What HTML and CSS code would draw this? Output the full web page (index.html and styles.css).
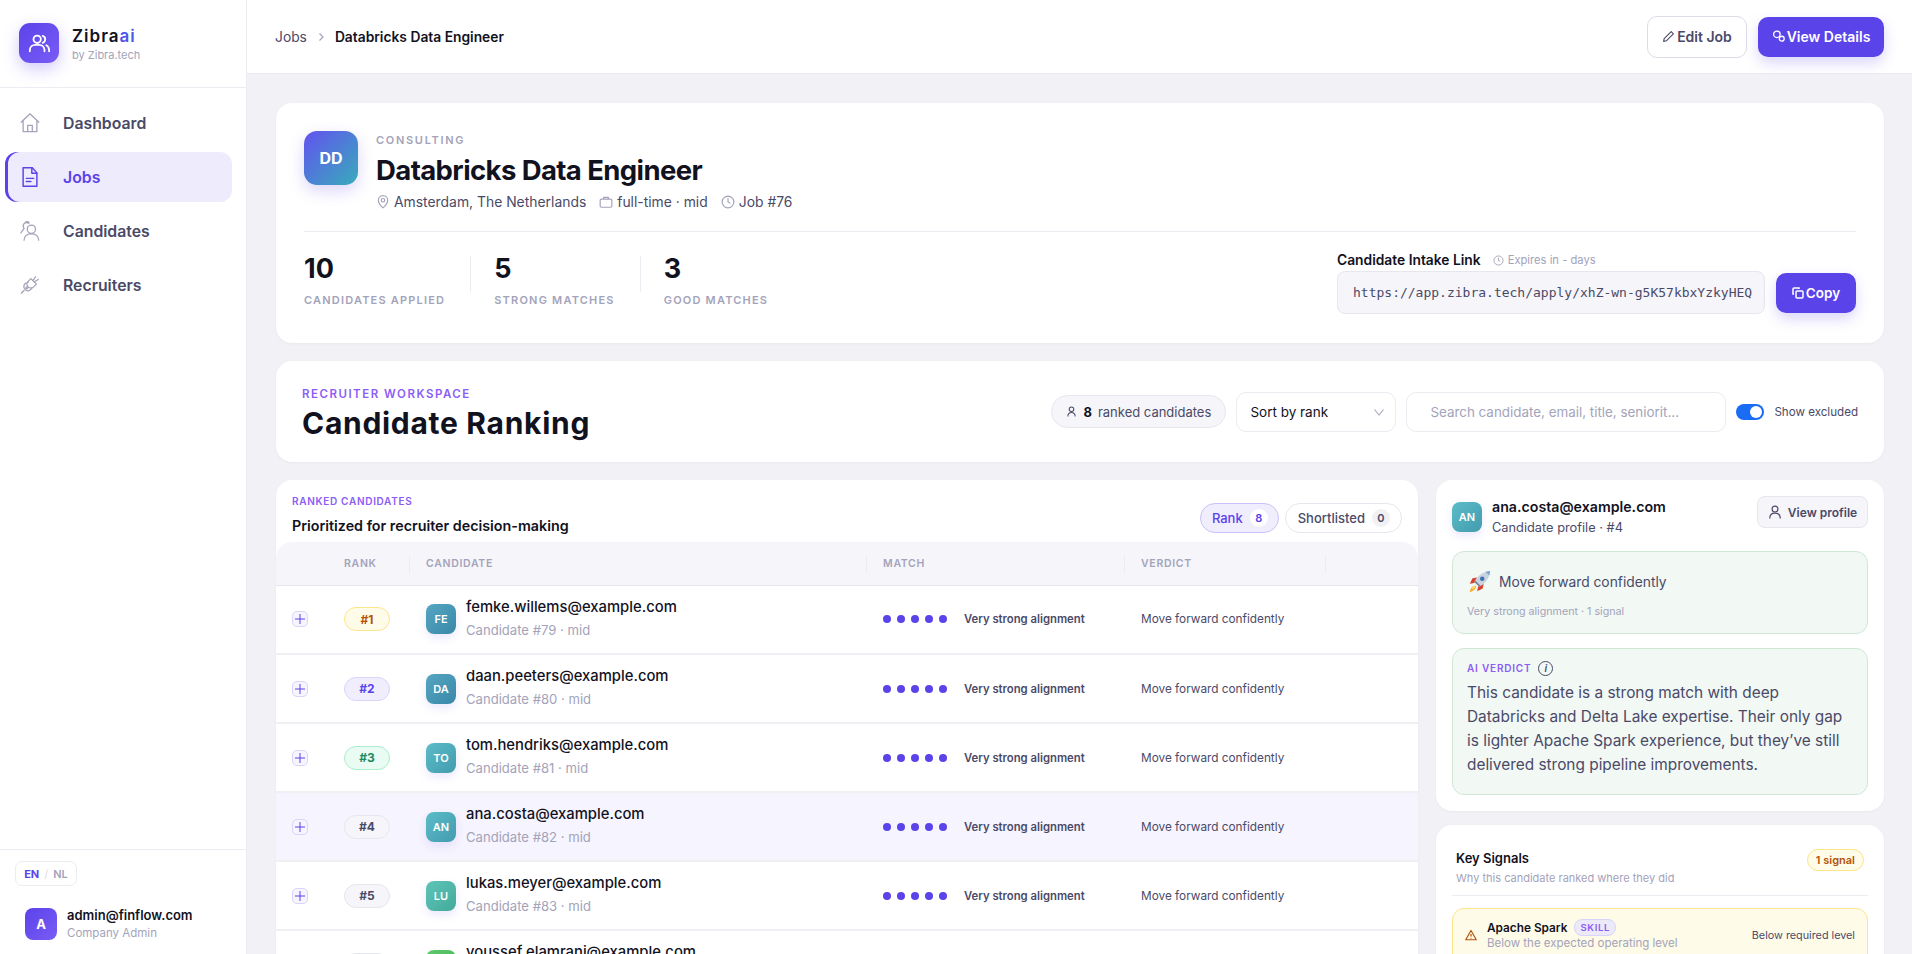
FILE: index.html
```html
<!DOCTYPE html>
<html>
    <head>
        <title>Databricks Data Engineer - Zibra</title>
        <link rel="stylesheet" href="styles.css">
    </head>
    <body>
        <div class="app">
            <!-- Sidebar -->
            <aside class="sidebar">
                <div class="brand">
                    <div class="brand-icon">
                        <svg width="22" height="22" viewBox="0 0 24 24" fill="none" stroke="#fff" stroke-width="2" stroke-linecap="round" stroke-linejoin="round"><circle cx="10" cy="8" r="4"/><path d="M2 21v-1.500a6 6 0 0 1 6-5.500h4a6 6 0 0 1 6 5.500V21"/><path d="M16 4.200a4 4 0 0 1 0 7.600"/><path d="M20 14.500a6 6 0 0 1 3 5V21"/></svg>
                    </div>
                    <div>
                        <div class="brand-name">Zibra<span>ai</span></div>
                        <div class="brand-sub">by Zibra.tech</div>
                    </div>
                </div>
                <nav class="nav">
                    <a class="nav-item">
                        <svg width="22" height="22" viewBox="0 0 24 24" fill="none" stroke="#a3a3ba" stroke-width="1.400" stroke-linejoin="round"><path d="M2 11.500 12 2l10 9.500"/><path d="M4.500 9.500V21.500h15V9.500"/><path d="M9.500 21.500v-7h5v7"/></svg>
                        Dashboard
                    </a>
                    <a class="nav-item active">
                        <svg width="22" height="22" viewBox="0 0 24 24" fill="none" stroke="#5b43ea" stroke-width="1.600" stroke-linejoin="round" stroke-linecap="round"><path d="M4.500 2h10l5 5.500V22h-15z"/><path d="M14 2v6h5.500"/><path d="M8 13.500h8M8 17h5"/></svg>
                        Jobs
                    </a>
                    <a class="nav-item">
                        <svg width="22" height="22" viewBox="0 0 24 24" fill="none" stroke="#a3a3ba" stroke-width="1.400" stroke-linecap="round"><circle cx="13.500" cy="10" r="4.500"/><path d="M5.500 22c0-4.500 3.500-7 8-7s8 2.500 8 7"/><path d="M10.500 3.500A4 4 0 0 0 5.500 4c-1.500 1.500-1 3.500 0 5.500L2 14"/><path d="M7 2.500c1-.8 3-1 4 .5"/></svg>
                        Candidates
                    </a>
                    <a class="nav-item">
                        <svg width="22" height="22" viewBox="0 0 24 24" fill="none" stroke="#a3a3ba" stroke-width="1.400" stroke-linecap="round" stroke-linejoin="round"><path d="M13 5l6 6-3 3a4.200 4.200 0 0 1-6-6z"/><path d="M18 3l-2.500 4M21 6l-4 2.500"/><path d="M10 9 7.500 10a4 4 0 0 0-1 6.500 4 4 0 0 0 5.500 1l2-2"/><path d="M5.500 18 2.500 21"/><circle cx="8.500" cy="15" r="1"/></svg>
                        Recruiters
                    </a>
                </nav>
                <div class="side-foot">
                    <div class="lang"><b>EN</b><i>/</i><span>NL</span></div>
                    <div class="user">
                        <div class="user-avatar">A</div>
                        <div>
                            <div class="user-mail">admin@finflow.com</div>
                            <div class="user-role">Company Admin</div>
                        </div>
                    </div>
                </div>
            </aside>

            <main class="main">
                <!-- Top bar -->
                <header class="topbar">
                    <div class="crumbs">
                        <span>Jobs</span>
                        <svg width="10" height="10" viewBox="0 0 10 10" fill="none" stroke="#a3a3ba" stroke-width="1.200"><path d="M3.500 1.500 7 5 3.500 8.500"/></svg>
                        <b>Databricks Data Engineer</b>
                    </div>
                    <div class="top-actions">
                        <a class="btn btn-light">
                            <svg width="13" height="13" viewBox="0 0 24 24" fill="none" stroke="#4a4a68" stroke-width="2" stroke-linejoin="round"><path d="M17 3l4 4L8 20l-5 1 1-5z"/></svg>
                            Edit Job
                        </a>
                        <a class="btn btn-main">
                            <svg width="13" height="13" viewBox="0 0 24 24" fill="none" stroke="#fff" stroke-width="2.400"><circle cx="9" cy="8" r="6"/><circle cx="18" cy="16" r="4.500"/></svg>
                            View Details
                        </a>
                    </div>
                </header>

                <div class="content">
                    <!-- Job card -->
                    <section class="card job-card">
                        <div class="job-top">
                            <div class="job-avatar">DD</div>
                            <div>
                                <div class="job-kicker">CONSULTING</div>
                                <h1 class="job-title">Databricks Data Engineer</h1>
                                <div class="job-meta">
                                    <span><svg width="14" height="14" viewBox="0 0 24 24" fill="none" stroke="#a3a3ba" stroke-width="2"><path d="M12 22s8-7 8-13a8 8 0 0 0-16 0c0 6 8 13 8 13z"/><circle cx="12" cy="9" r="3"/></svg>Amsterdam, The Netherlands</span>
                                    <span><svg width="14" height="14" viewBox="0 0 24 24" fill="none" stroke="#a3a3ba" stroke-width="2"><rect x="2" y="7" width="20" height="14" rx="2"/><path d="M8 7V4h8v3"/></svg>full-time · mid</span>
                                    <span><svg width="14" height="14" viewBox="0 0 24 24" fill="none" stroke="#a3a3ba" stroke-width="2"><circle cx="12" cy="12" r="10"/><path d="M12 6v6l4 2"/></svg>Job #76</span>
                                </div>
                            </div>
                        </div>
                        <div class="job-bottom">
                            <div class="stats">
                                <div class="stat stat-first">
                                    <div class="stat-num">10</div>
                                    <div class="stat-label">CANDIDATES APPLIED</div>
                                </div>
                                <div class="stat">
                                    <div class="stat-num">5</div>
                                    <div class="stat-label">STRONG MATCHES</div>
                                </div>
                                <div class="stat">
                                    <div class="stat-num">3</div>
                                    <div class="stat-label">GOOD MATCHES</div>
                                </div>
                            </div>
                            <div class="intake">
                                <div class="intake-label">
                                    <b>Candidate Intake Link</b>
                                    <span><svg width="11" height="11" viewBox="0 0 24 24" fill="none" stroke="#a3a3ba" stroke-width="2"><circle cx="12" cy="12" r="10"/><path d="M12 6v6l4 2"/></svg>Expires in - days</span>
                                </div>
                                <div class="intake-row">
                                    <div class="intake-link">https://app.zibra.tech/apply/xhZ-wn-g5K57kbxYzkyHEQ</div>
                                    <a class="btn btn-main btn-copy">
                                        <svg width="12" height="12" viewBox="0 0 24 24" fill="none" stroke="#fff" stroke-width="3"><rect x="8" y="8" width="14" height="14" rx="2"/><path d="M4 14H2V4a2 2 0 0 1 2-2h10v2"/></svg>
                                        Copy
                                    </a>
                                </div>
                            </div>
                        </div>
                    </section>

                    <!-- Workspace bar -->
                    <section class="card workspace">
                        <div class="ws-text">
                            <div class="eyebrow">RECRUITER WORKSPACE</div>
                            <h2 class="ws-title">Candidate Ranking</h2>
                        </div>
                        <div class="ws-tools">
                            <div class="count-pill">
                                <svg width="11" height="11" viewBox="0 0 24 24" fill="none" stroke="#4a4a68" stroke-width="2.200"><circle cx="12" cy="7" r="5"/><path d="M4 23c0-6 3-9 8-9s8 3 8 9"/></svg>
                                <b>8</b> ranked candidates
                            </div>
                            <div class="select">
                                Sort by rank
                                <svg width="12" height="12" viewBox="0 0 12 12" fill="none" stroke="#a3a3ba" stroke-width="1.100"><path d="M1.500 3.500 6 9l4.500-5.500"/></svg>
                            </div>
                            <div class="search">Search candidate, email, title, seniorit...</div>
                            <div class="toggle"><i></i></div>
                            <div class="toggle-label">Show excluded</div>
                        </div>
                    </section>

                    <div class="columns">
                        <!-- Ranked list -->
                        <section class="card list-panel">
                            <div class="list-head">
                                <div>
                                    <div class="eyebrow eyebrow-small">RANKED CANDIDATES</div>
                                    <div class="list-title">Prioritized for recruiter decision-making</div>
                                </div>
                                <div class="tabs">
                                    <a class="tab tab-on">Rank <b>8</b></a>
                                    <a class="tab">Shortlisted <b>0</b></a>
                                </div>
                            </div>
                            <table class="rank-table">
                                <colgroup>
                                    <col class="col-plus"><col class="col-rank"><col class="col-cand"><col class="col-match"><col class="col-verdict"><col>
                                </colgroup>
                                <thead>
                                    <tr>
                                        <th></th>
                                        <th>RANK</th>
                                        <th class="sep">CANDIDATE</th>
                                        <th class="sep">MATCH</th>
                                        <th class="sep">VERDICT</th>
                                        <th class="sep"></th>
                                    </tr>
                                </thead>
                                <tbody>
                                    <tr>
                                        <td><span class="plus"><svg width="10" height="10" viewBox="0 0 10 10" stroke="#5b43ea" stroke-width="1"><path d="M5 0v10M0 5h10"/></svg></span></td>
                                        <td><span class="rank rank-gold">#1</span></td>
                                        <td><div class="cand"><div class="avatar av-blue">FE</div><div><div class="cand-mail">femke.willems@example.com</div><div class="cand-sub">Candidate #79 · mid</div></div></div></td>
                                        <td><div class="match"><span class="dots"><i></i><i></i><i></i><i></i><i></i></span><b>Very strong alignment</b></div></td>
                                        <td class="verdict">Move forward confidently</td>
                                        <td></td>
                                    </tr>
                                    <tr>
                                        <td><span class="plus"><svg width="10" height="10" viewBox="0 0 10 10" stroke="#5b43ea" stroke-width="1"><path d="M5 0v10M0 5h10"/></svg></span></td>
                                        <td><span class="rank rank-violet">#2</span></td>
                                        <td><div class="cand"><div class="avatar av-blue">DA</div><div><div class="cand-mail">daan.peeters@example.com</div><div class="cand-sub">Candidate #80 · mid</div></div></div></td>
                                        <td><div class="match"><span class="dots"><i></i><i></i><i></i><i></i><i></i></span><b>Very strong alignment</b></div></td>
                                        <td class="verdict">Move forward confidently</td>
                                        <td></td>
                                    </tr>
                                    <tr>
                                        <td><span class="plus"><svg width="10" height="10" viewBox="0 0 10 10" stroke="#5b43ea" stroke-width="1"><path d="M5 0v10M0 5h10"/></svg></span></td>
                                        <td><span class="rank rank-green">#3</span></td>
                                        <td><div class="cand"><div class="avatar av-teal">TO</div><div><div class="cand-mail">tom.hendriks@example.com</div><div class="cand-sub">Candidate #81 · mid</div></div></div></td>
                                        <td><div class="match"><span class="dots"><i></i><i></i><i></i><i></i><i></i></span><b>Very strong alignment</b></div></td>
                                        <td class="verdict">Move forward confidently</td>
                                        <td></td>
                                    </tr>
                                    <tr class="row-on">
                                        <td><span class="plus"><svg width="10" height="10" viewBox="0 0 10 10" stroke="#5b43ea" stroke-width="1"><path d="M5 0v10M0 5h10"/></svg></span></td>
                                        <td><span class="rank">#4</span></td>
                                        <td><div class="cand"><div class="avatar av-teal">AN</div><div><div class="cand-mail">ana.costa@example.com</div><div class="cand-sub">Candidate #82 · mid</div></div></div></td>
                                        <td><div class="match"><span class="dots"><i></i><i></i><i></i><i></i><i></i></span><b>Very strong alignment</b></div></td>
                                        <td class="verdict">Move forward confidently</td>
                                        <td></td>
                                    </tr>
                                    <tr>
                                        <td><span class="plus"><svg width="10" height="10" viewBox="0 0 10 10" stroke="#5b43ea" stroke-width="1"><path d="M5 0v10M0 5h10"/></svg></span></td>
                                        <td><span class="rank">#5</span></td>
                                        <td><div class="cand"><div class="avatar av-mint">LU</div><div><div class="cand-mail">lukas.meyer@example.com</div><div class="cand-sub">Candidate #83 · mid</div></div></div></td>
                                        <td><div class="match"><span class="dots"><i></i><i></i><i></i><i></i><i></i></span><b>Very strong alignment</b></div></td>
                                        <td class="verdict">Move forward confidently</td>
                                        <td></td>
                                    </tr>
                                    <tr>
                                        <td><span class="plus"><svg width="10" height="10" viewBox="0 0 10 10" stroke="#5b43ea" stroke-width="1"><path d="M5 0v10M0 5h10"/></svg></span></td>
                                        <td><span class="rank">#6</span></td>
                                        <td><div class="cand"><div class="avatar av-green">YO</div><div><div class="cand-mail">youssef.elamrani@example.com</div><div class="cand-sub">Candidate #84 · mid</div></div></div></td>
                                        <td><div class="match"><span class="dots"><i></i><i></i><i></i><i></i><i></i></span><b>Very strong alignment</b></div></td>
                                        <td class="verdict">Move forward confidently</td>
                                        <td></td>
                                    </tr>
                                </tbody>
                            </table>
                        </section>

                        <!-- Detail column -->
                        <div class="detail">
                            <section class="card profile">
                                <div class="profile-head">
                                    <div class="avatar av-teal profile-avatar">AN</div>
                                    <div class="profile-text">
                                        <div class="profile-mail">ana.costa@example.com</div>
                                        <div class="profile-sub">Candidate profile · #4</div>
                                    </div>
                                    <a class="view-profile">
                                        <svg width="14" height="14" viewBox="0 0 24 24" fill="none" stroke="#4a4a68" stroke-width="2"><circle cx="12" cy="7" r="5"/><path d="M3 23c0-6 4-9 9-9s9 3 9 9"/></svg>
                                        View profile
                                    </a>
                                </div>
                                <div class="green-box verdict-box">
                                    <div class="verdict-line">
                                        <svg width="24" height="24" viewBox="0 0 26 26"><path d="M8 14 3 15l3-6 5-1z" fill="#d9412e"/><path d="M12 18l-1 5 6-3 1-5z" fill="#d9412e"/><path d="M9 17c-3 0-5 2-6 7 4-1 6-3 7-6z" fill="#f7a823"/><path d="M8 17c-1.500.5-2.500 2-3 4 2-.5 3.500-1.500 4-3z" fill="#fde68a"/><path d="M8 13C11 6 17 2 25 1c-1 8-5 14-12 17z" fill="#c8d3de"/><path d="M20 2l5-1c0 2-.5 3.500-1 5z" fill="#7fa6d8"/><path d="M8 13l5 5 1.500-1-5.500-5.500z" fill="#6f8193"/><circle cx="16.500" cy="9.500" r="2.400" fill="#3f6fb5"/></svg>
                                        Move forward confidently
                                    </div>
                                    <div class="verdict-sub">Very strong alignment · 1 signal</div>
                                </div>
                                <div class="green-box ai-box">
                                    <div class="ai-label">AI VERDICT <span class="info">i</span></div>
                                    <p class="ai-text">This candidate is a strong match with deep Databricks and Delta Lake expertise. Their only gap is lighter Apache Spark experience, but they’ve still delivered strong pipeline improvements.</p>
                                </div>
                            </section>

                            <section class="card signals">
                                <div class="signals-head">
                                    <div>
                                        <div class="signals-title">Key Signals</div>
                                        <div class="signals-sub">Why this candidate ranked where they did</div>
                                    </div>
                                    <span class="signal-count">1 signal</span>
                                </div>
                                <div class="signal">
                                    <svg class="signal-icon" width="12" height="12" viewBox="0 0 24 24" fill="none" stroke="#b45309" stroke-width="2.400" stroke-linejoin="round"><path d="M12 3 1.500 21.500h21z"/><path d="M12 10v5M12 17.500v1.500"/></svg>
                                    <div class="signal-body">
                                        <div class="signal-name">Apache Spark <span class="tag">SKILL</span></div>
                                        <div class="signal-sub">Below the expected operating level</div>
                                    </div>
                                    <div class="signal-state">Below required level</div>
                                </div>
                            </section>
                        </div>
                    </div>
                </div>
            </main>
        </div>
    </body>
</html>
```

FILE: styles.css
```css
* {
    padding: 0;
    margin: 0;
    box-sizing: border-box;
}

html, body {
    height: 100%;
    overflow: hidden;
}

body {
    font-family: "Inter", "Noto Sans", sans-serif;
    color: #12121f;
    background: #f1f1f6;
}

.app {
    display: flex;
    height: 954px;
    overflow: hidden;
}

/* Sidebar */
.sidebar {
    width: 247px;
    flex: none;
    display: flex;
    flex-direction: column;
    background: #fff;
    border-right: 1px solid #ececf2;
}

.brand {
    height: 88px;
    display: flex;
    align-items: flex-start;
    gap: 13px;
    padding: 23px 0 0 19px;
    border-bottom: 1px solid #ececf2;
}

.brand-icon {
    width: 40px;
    height: 40px;
    border-radius: 11px;
    display: flex;
    align-items: center;
    justify-content: center;
    background: linear-gradient(135deg, #5b43ea, #7a5cf5);
    box-shadow: 0 6px 16px rgba(91, 67, 234, .28);
}

.brand-name {
    font-size: 17px;
    line-height: 22px;
    margin-top: 2px;
    font-weight: 600;
    letter-spacing: 1px;
}

.brand-name span {
    color: #4f57ea;
}

.brand-sub {
    font-size: 11px;
    line-height: 16px;
    margin-top: 0;
    color: #a3a3ba;
}

.nav {
    flex: 1;
    padding: 10px 14px 0 5px;
    display: flex;
    flex-direction: column;
    gap: 4px;
}

.nav-item {
    height: 50px;
    display: flex;
    align-items: center;
    gap: 22px;
    padding-left: 14px;
    border-radius: 12px;
    font-size: 15.800px;
    font-weight: 600;
    color: #4a4a68;
}

.nav-item.active {
    color: #5b43ea;
    background: #eeecfc;
    box-shadow: inset 3px 0 0 #5b43ea;
}

.side-foot {
    height: 105px;
    padding: 11px 0 0 15px;
    border-top: 1px solid #ececf2;
}

.lang {
    width: 62px;
    height: 25px;
    display: flex;
    align-items: center;
    justify-content: center;
    gap: 5px;
    border: 1px solid #ececf2;
    border-radius: 7px;
    font-size: 11px;
    font-weight: 600;
    color: #a3a3ba;
}

.lang b {
    font-weight: 700;
    color: #5b43ea;
}

.lang i {
    font-style: normal;
    font-weight: 400;
    color: #dcdce6;
}

.user {
    display: flex;
    align-items: center;
    gap: 10px;
    margin: 20px 0 0 10px;
}

.user-avatar {
    width: 32px;
    height: 32px;
    border-radius: 8px;
    display: flex;
    align-items: center;
    justify-content: center;
    font-size: 13px;
    font-weight: 700;
    color: #fff;
    background: linear-gradient(135deg, #5b43ea, #7a5cf5);
}

.user-mail {
    font-size: 13px;
    line-height: 18px;
    font-weight: 600;
}

.user-role {
    font-size: 11.500px;
    line-height: 16px;
    margin-top: 1px;
    color: #a3a3ba;
}

/* Top bar */
.main {
    flex: 1;
    min-width: 0;
}

.topbar {
    height: 74px;
    display: flex;
    align-items: center;
    justify-content: space-between;
    padding: 0 28px;
    background: #fff;
    border-bottom: 1px solid #ececf2;
}

.crumbs {
    display: flex;
    align-items: center;
    gap: 9px;
    font-size: 13.800px;
    color: #4a4a68;
}

.crumbs b {
    font-weight: 600;
    color: #12121f;
}

.top-actions {
    display: flex;
    align-items: center;
    gap: 11px;
}

.btn {
    display: flex;
    align-items: center;
    justify-content: center;
    gap: 2px;
    border-radius: 10px;
    font-size: 14px;
    font-weight: 600;
}

.btn-light {
    width: 100px;
    height: 42px;
    color: #4a4a68;
    background: #fff;
    border: 1px solid #dcdce6;
}

.btn-main {
    width: 126px;
    height: 40px;
    color: #fff;
    background: #5b43ea;
    box-shadow: 0 6px 14px rgba(91, 67, 234, .22);
}

/* Cards */
.content {
    padding: 29px 28px 0 29px;
    display: flex;
    flex-direction: column;
    gap: 18px;
}

.card {
    background: #fff;
    border-radius: 16px;
    box-shadow: 0 1px 3px rgba(18, 18, 31, .04);
}

.job-card {
    height: 240px;
    padding: 28px 28px 0;
}

.job-top {
    height: 101px;
    display: flex;
    gap: 18px;
    border-bottom: 1px solid #ececf2;
}

.job-avatar {
    width: 54px;
    height: 54px;
    border-radius: 13px;
    display: flex;
    align-items: center;
    justify-content: center;
    font-size: 16px;
    font-weight: 700;
    color: #fff;
    background: linear-gradient(135deg, #6352f0, #37acbb);
    box-shadow: 0 6px 16px rgba(91, 67, 234, .22);
}

.job-kicker {
    font-size: 11px;
    line-height: 18px;
    font-weight: 600;
    letter-spacing: 1.700px;
    color: #a3a3ba;
}

.job-title {
    font-size: 27.500px;
    line-height: 36px;
    margin-top: 3px;
    font-weight: 700;
    letter-spacing: -.6px;
}

.job-meta {
    display: flex;
    gap: 13px;
    margin-top: 4px;
    font-size: 13.900px;
    line-height: 20px;
    color: #4a4a68;
}

.job-meta span {
    display: flex;
    align-items: center;
    gap: 4px;
}

.job-bottom {
    display: flex;
    justify-content: space-between;
    padding-top: 19px;
}

.stats {
    display: flex;
}

.stat {
    padding: 1px 25px 0 24px;
    position: relative;
}

.stat-first {
    padding-left: 0;
}

.stat + .stat::before {
    content: '';
    position: absolute;
    left: 0;
    top: 5px;
    width: 1px;
    height: 36px;
    background: #ececf2;
}

.stat-num {
    font-size: 27px;
    line-height: 34px;
    font-weight: 700;
}

.stat-label {
    font-size: 11px;
    line-height: 14px;
    margin-top: 7px;
    font-weight: 600;
    letter-spacing: 1.200px;
    color: #a3a3ba;
}

.intake {
    width: 519px;
}

.intake-label {
    display: flex;
    align-items: center;
    gap: 12px;
    height: 18px;
    margin-bottom: 2px;
}

.intake-label b {
    font-size: 13.800px;
    font-weight: 600;
}

.intake-label span {
    display: flex;
    align-items: center;
    gap: 4px;
    font-size: 11.200px;
    color: #a3a3ba;
}

.intake-row {
    display: flex;
    align-items: center;
    gap: 11px;
}

.intake-link {
    width: 428px;
    height: 43px;
    line-height: 41px;
    padding-left: 15px;
    overflow: hidden;
    white-space: nowrap;
    font-family: "DejaVu Sans Mono", monospace;
    font-size: 13px;
    color: #4a4a68;
    background: #f6f5fa;
    border: 1px solid #e6e6ee;
    border-radius: 8px;
}

.btn-copy {
    width: 80px;
    font-size: 13.500px;
}

/* Workspace bar */
.workspace {
    height: 101px;
    display: flex;
    align-items: center;
    justify-content: space-between;
    padding: 0 26px;
}

.ws-text {
    padding-top: 4px;
}

.eyebrow {
    font-size: 11.500px;
    line-height: 16px;
    font-weight: 600;
    letter-spacing: 1.500px;
    color: #8b5cf6;
}

.eyebrow-small {
    font-size: 10px;
    letter-spacing: .7px;
}

.ws-title {
    font-size: 30px;
    line-height: 36px;
    margin-top: 3px;
    font-weight: 700;
    letter-spacing: .7px;
}

.ws-tools {
    display: flex;
    align-items: center;
    gap: 10px;
}

.count-pill {
    width: 175px;
    height: 33px;
    display: flex;
    align-items: center;
    justify-content: center;
    gap: 5px;
    font-size: 13px;
    color: #4a4a68;
    background: #f6f5fa;
    border: 1px solid #e6e6ee;
    border-radius: 17px;
}

.count-pill b {
    font-weight: 700;
    color: #12121f;
    margin: 0 1px;
}

.select {
    width: 160px;
    height: 40px;
    display: flex;
    align-items: center;
    justify-content: space-between;
    padding: 0 10px 0 13px;
    font-size: 13.500px;
    border: 1px solid #ececf2;
    border-radius: 10px;
}

.search {
    width: 320px;
    height: 40px;
    line-height: 38px;
    padding-left: 23px;
    font-size: 13.400px;
    color: #a3a3ba;
    border: 1px solid #ececf2;
    border-radius: 10px;
}

.toggle {
    width: 28px;
    height: 16px;
    padding: 2px;
    display: flex;
    justify-content: flex-end;
    background: #1a6cf5;
    border-radius: 8px;
}

.toggle i {
    width: 12px;
    height: 12px;
    border-radius: 50%;
    background: #fff;
}

.toggle-label {
    font-size: 11.600px;
    color: #4a4a68;
}

/* Ranked list */
.columns {
    display: grid;
    grid-template-columns: 1142px 448px;
    gap: 18px;
    align-items: start;
}

.list-head {
    height: 62px;
    display: flex;
    align-items: center;
    justify-content: space-between;
    padding: 6px 16px 0;
}

.list-title {
    font-size: 14.300px;
    line-height: 20px;
    margin-top: 7px;
    font-weight: 600;
}

.tabs {
    display: flex;
    gap: 6px;
    margin-top: 8px;
}

.tab {
    height: 30px;
    display: flex;
    align-items: center;
    gap: 7px;
    padding: 0 11px 0 12px;
    font-size: 13px;
    font-weight: 500;
    color: #4a4a68;
    background: #fff;
    border: 1px solid #e6e6ee;
    border-radius: 15px;
}

.tab b {
    width: 18px;
    height: 18px;
    line-height: 18px;
    text-align: center;
    font-size: 11px;
    font-weight: 600;
    background: #f1f1f4;
    border-radius: 50%;
}

.tab-on {
    padding: 0 10px 0 11px;
    color: #5b43ea;
    background: #f0eefd;
    border-color: #c9c1fa;
}

.tab-on b {
    background: #fff;
}

.rank-table {
    width: 100%;
    table-layout: fixed;
    border-collapse: collapse;
}

.col-plus { width: 51px; }
.col-rank { width: 82px; }
.col-cand { width: 457px; }
.col-match { width: 258px; }
.col-verdict { width: 201px; }

.rank-table th {
    height: 43px;
    padding: 0 17px;
    text-align: left;
    position: relative;
    font-size: 10.500px;
    font-weight: 600;
    letter-spacing: .7px;
    color: #a3a3ba;
    background: #f6f5fa;
    border-bottom: 1px solid #e6e6ee;
}

.rank-table th:first-child {
    border-top-left-radius: 16px;
}

.rank-table th:last-child {
    border-top-right-radius: 16px;
}

.rank-table th.sep::before {
    content: '';
    position: absolute;
    left: 0;
    top: 14px;
    width: 1px;
    height: 17px;
    background: #ebebf1;
}

.rank-table td {
    height: 69px;
    padding: 0 17px;
    border-bottom: 2px solid #f0f0f4;
}

.rank-table td:first-child {
    padding-left: 16px;
}

.row-on td {
    background: #f6f4fe;
}

.plus {
    width: 16px;
    height: 16px;
    display: flex;
    align-items: center;
    justify-content: center;
    background: #f6f5fe;
    border: 1px solid #d9d4fb;
    border-radius: 5px;
}

.rank {
    width: 46px;
    height: 24px;
    display: flex;
    align-items: center;
    justify-content: center;
    font-size: 12px;
    font-weight: 700;
    color: #4a4a68;
    background: #f6f5fa;
    border: 1px solid #e6e6ee;
    border-radius: 12px;
}

.rank-gold { color: #b45309; background: #fffbe9; border-color: #fde68a; }
.rank-violet { color: #5b43ea; background: #f0eefd; border-color: #d9d4fb; }
.rank-green { color: #1f8a5b; background: #e9fbf2; border-color: #a7f0cd; }

.cand {
    display: flex;
    align-items: center;
    gap: 10px;
}

.avatar {
    width: 30px;
    height: 30px;
    flex: none;
    border-radius: 8px;
    display: flex;
    align-items: center;
    justify-content: center;
    font-size: 11px;
    font-weight: 600;
    color: #fff;
    box-shadow: 0 4px 10px rgba(91, 67, 234, .12);
}

.av-blue { background: linear-gradient(135deg, #55a6c2, #3a88a8); }
.av-teal { background: linear-gradient(135deg, #5cbcc8, #429cae); }
.av-mint { background: linear-gradient(135deg, #5fc4b8, #42aa9a); }
.av-green { background: linear-gradient(135deg, #5fca6c, #45b45a); }

.cand-mail {
    font-size: 14.800px;
    line-height: 20px;
    margin-top: -3px;
    font-weight: 500;
}

.cand-sub {
    font-size: 13.100px;
    line-height: 18px;
    margin-top: 4px;
    color: #a3a3ba;
}

.match {
    display: flex;
    align-items: center;
    gap: 17px;
}

.match b {
    font-size: 11.300px;
    font-weight: 600;
    color: #4a4a68;
    white-space: nowrap;
}

.dots {
    display: flex;
    gap: 6px;
}

.dots i {
    width: 8px;
    height: 8px;
    border-radius: 50%;
    background: #5b43ea;
}

.verdict {
    font-size: 11.800px;
    color: #4a4a68;
    white-space: nowrap;
}

/* Detail column */
.detail {
    display: flex;
    flex-direction: column;
    gap: 14px;
}

.profile {
    height: 331px;
    padding: 16px;
}

.profile-head {
    display: flex;
    align-items: flex-start;
    margin-bottom: 14px;
}

.profile-avatar {
    margin-top: 6px;
}

.profile-text {
    flex: 1;
    margin: 2px 0 0 10px;
}

.profile-mail {
    font-size: 14.200px;
    line-height: 18px;
    font-weight: 600;
}

.profile-sub {
    font-size: 12.800px;
    line-height: 18px;
    margin-top: 3px;
    color: #4a4a68;
}

.view-profile {
    width: 111px;
    height: 32px;
    display: flex;
    align-items: center;
    justify-content: center;
    gap: 6px;
    font-size: 12px;
    font-weight: 600;
    color: #4a4a68;
    background: #f6f5fa;
    border: 1px solid #e6e6ee;
    border-radius: 8px;
}

.green-box {
    background: #f2f8f4;
    border: 1px solid #cfe8d6;
    border-radius: 12px;
}

.verdict-box {
    height: 83px;
    padding: 15px 14px 0;
    margin-bottom: 14px;
}

.verdict-line {
    display: flex;
    align-items: center;
    gap: 8px;
    height: 30px;
    font-size: 13.800px;
    color: #4a4a68;
}

.verdict-sub {
    font-size: 10.700px;
    line-height: 16px;
    margin-top: 7px;
    color: #a3a3ba;
}

.ai-box {
    height: 147px;
    padding: 11px 14px 0;
}

.ai-label {
    display: flex;
    align-items: center;
    gap: 7px;
    height: 16px;
    font-size: 10px;
    font-weight: 600;
    letter-spacing: .8px;
    color: #8b5cf6;
}

.info {
    width: 15px;
    height: 15px;
    display: flex;
    align-items: center;
    justify-content: center;
    font-size: 10px;
    font-style: italic;
    letter-spacing: 0;
    color: #4a4a68;
    border: 1px solid #4a4a68;
    border-radius: 50%;
}

.ai-text {
    font-size: 15.400px;
    line-height: 24px;
    margin-top: 5px;
    color: #4a4a68;
}

.signals {
    padding: 23px 16px 0;
    height: 200px;
}

.signals-head {
    display: flex;
    align-items: flex-start;
    justify-content: space-between;
    padding: 0 4px 8px;
    border-bottom: 1px solid #ececf2;
}

.signals-title {
    font-size: 13px;
    line-height: 20px;
    font-weight: 600;
}

.signals-sub {
    font-size: 11px;
    line-height: 18px;
    margin-top: 1px;
    color: #a3a3ba;
}

.signal-count {
    height: 22px;
    padding: 0 8px;
    margin-top: 1px;
    font-size: 11px;
    line-height: 20px;
    font-weight: 600;
    color: #b45309;
    background: #fffbe9;
    border: 1px solid #fde68a;
    border-radius: 11px;
}

.signal {
    display: flex;
    align-items: center;
    gap: 10px;
    height: 60px;
    margin-top: 12px;
    padding: 0 12px;
    background: #fefbe8;
    border: 1px solid #fde68a;
    border-radius: 12px;
}

.signal-icon {
    margin-top: -6px;
}

.signal-body {
    flex: 1;
    margin-top: -6px;
}

.signal-name {
    display: flex;
    align-items: center;
    gap: 7px;
    font-size: 11.800px;
    font-weight: 600;
}

.tag {
    padding: 0 5px;
    font-size: 9.500px;
    line-height: 15px;
    letter-spacing: .7px;
    color: #8b5cf6;
    background: #ece9f8;
    border: 1px solid #d9d4fb;
    border-radius: 8px;
}

.signal-sub {
    font-size: 11.500px;
    line-height: 15px;
    color: #a3a3ba;
}

.signal-state {
    font-size: 10.800px;
    margin-top: -6px;
    color: #4a4a68;
}
```
